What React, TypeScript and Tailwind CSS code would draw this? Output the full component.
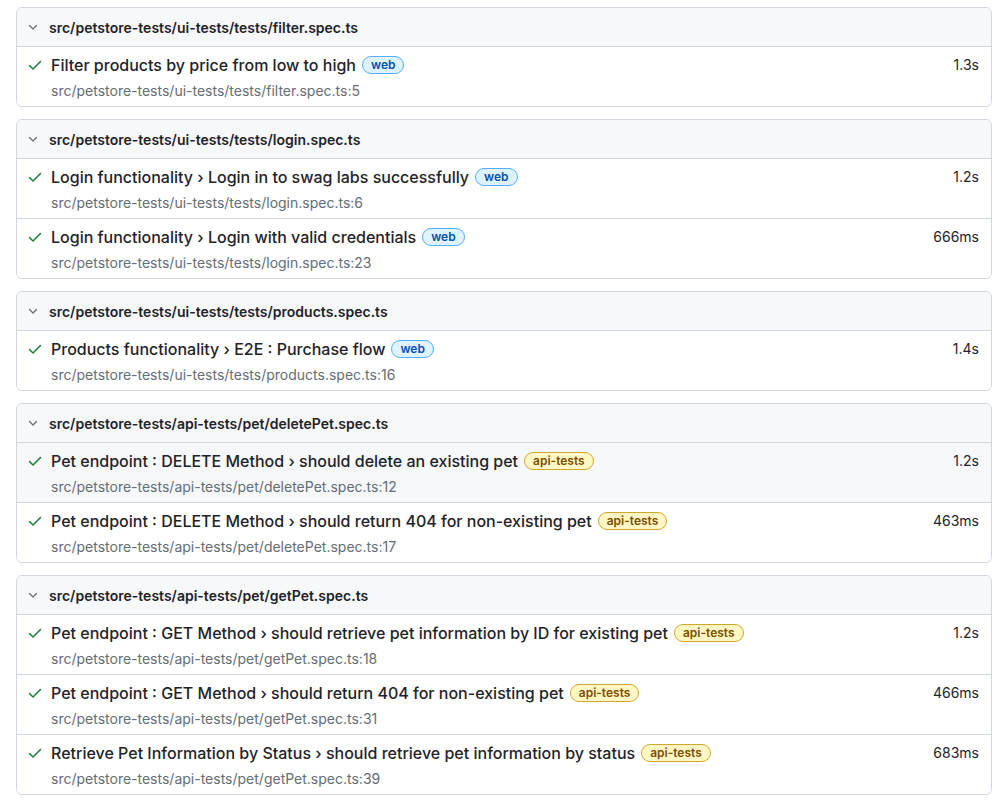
import React from "react";

type Test = { title: string; tag: "web" | "api-tests"; loc: string; time: string; hover?: boolean };
type FileGroup = { file: string; tests: Test[] };

const files: FileGroup[] = [
  {
    file: "src/petstore-tests/ui-tests/tests/filter.spec.ts",
    tests: [{ title: "Filter products by price from low to high", tag: "web", loc: "src/petstore-tests/ui-tests/tests/filter.spec.ts:5", time: "1.3s" }],
  },
  {
    file: "src/petstore-tests/ui-tests/tests/login.spec.ts",
    tests: [
      { title: "Login functionality › Login in to swag labs successfully", tag: "web", loc: "src/petstore-tests/ui-tests/tests/login.spec.ts:6", time: "1.2s" },
      { title: "Login functionality › Login with valid credentials", tag: "web", loc: "src/petstore-tests/ui-tests/tests/login.spec.ts:23", time: "666ms" },
    ],
  },
  {
    file: "src/petstore-tests/ui-tests/tests/products.spec.ts",
    tests: [{ title: "Products functionality › E2E : Purchase flow", tag: "web", loc: "src/petstore-tests/ui-tests/tests/products.spec.ts:16", time: "1.4s" }],
  },
  {
    file: "src/petstore-tests/api-tests/pet/deletePet.spec.ts",
    tests: [
      { title: "Pet endpoint : DELETE Method › should delete an existing pet", tag: "api-tests", loc: "src/petstore-tests/api-tests/pet/deletePet.spec.ts:12", time: "1.2s", hover: true },
      { title: "Pet endpoint : DELETE Method › should return 404 for non-existing pet", tag: "api-tests", loc: "src/petstore-tests/api-tests/pet/deletePet.spec.ts:17", time: "463ms" },
    ],
  },
  {
    file: "src/petstore-tests/api-tests/pet/getPet.spec.ts",
    tests: [
      { title: "Pet endpoint : GET Method › should retrieve pet information by ID for existing pet", tag: "api-tests", loc: "src/petstore-tests/api-tests/pet/getPet.spec.ts:18", time: "1.2s" },
      { title: "Pet endpoint : GET Method › should return 404 for non-existing pet", tag: "api-tests", loc: "src/petstore-tests/api-tests/pet/getPet.spec.ts:31", time: "466ms" },
      { title: "Retrieve Pet Information by Status › should retrieve pet information by status", tag: "api-tests", loc: "src/petstore-tests/api-tests/pet/getPet.spec.ts:39", time: "683ms" },
    ],
  },
];

function Chevron() {
  return (
    <svg width="16" height="16" viewBox="0 0 16 16" className="text-[#656d76]">
      <path d="M4.5 6.5 8 10l3.5-3.5" fill="none" stroke="currentColor" strokeWidth="1.2" strokeLinecap="round" strokeLinejoin="round" />
    </svg>
  );
}

function Check() {
  return (
    <svg width="16" height="16" viewBox="0 0 16 16" className="shrink-0 text-[#1a7f37]">
      <path d="M2.5 8.5 6 12l7.5-7.5" fill="none" stroke="currentColor" strokeWidth="1.5" strokeLinecap="round" strokeLinejoin="round" />
    </svg>
  );
}

function Tag({ name }: { name: "web" | "api-tests" }) {
  const cls =
    name === "web"
      ? "bg-[#ddf4ff] border-[#54aeff] text-[#0550ae]"
      : "bg-[#fff8c5] border-[#d4a72c] text-[#7d4e00]";
  return (
    <span className={`ml-[6px] inline-flex h-[18px] items-center rounded-full border px-[8px] text-[12px] font-semibold leading-none ${cls}`}>
      {name}
    </span>
  );
}

export default function App() {
  return (
    <div className="min-h-[803px] bg-white pl-[16px] pr-[8px] pt-[7px] text-[#1f2328]" style={{ fontFamily: "Inter, 'Noto Sans', sans-serif" }}>
      <div className="flex flex-col gap-[12px]">
        {files.map((f) => (
          <div key={f.file} className="overflow-hidden rounded-[6px] border border-[#d0d7de]">
            <div className="flex h-[38px] items-center gap-[8px] bg-[#f6f8fa] pl-[8px] text-[14px] font-semibold">
              <Chevron />
              <span>{f.file}</span>
            </div>
            {f.tests.map((t) => (
              <div key={t.loc} className={`flex border-t border-[#d0d7de] pb-[5px] pl-[10px] pr-[12px] pt-[5px] ${t.hover ? "bg-[#f6f8fa]" : "bg-white"}`}>
                <div className="flex-1">
                  <div className="flex h-[25px] items-center">
                    <Check />
                    <span className="ml-[8px] text-[16px] font-medium">{t.title}</span>
                    <Tag name={t.tag} />
                  </div>
                  <div className="ml-[24px] mt-[3px] h-[21px] text-[14px] leading-[21px] text-[#656d76]">{t.loc}</div>
                </div>
                <div className="h-[25px] text-[14px] leading-[25px] text-[#1f2328]">{t.time}</div>
              </div>
            ))}
          </div>
        ))}
      </div>
    </div>
  );
}
